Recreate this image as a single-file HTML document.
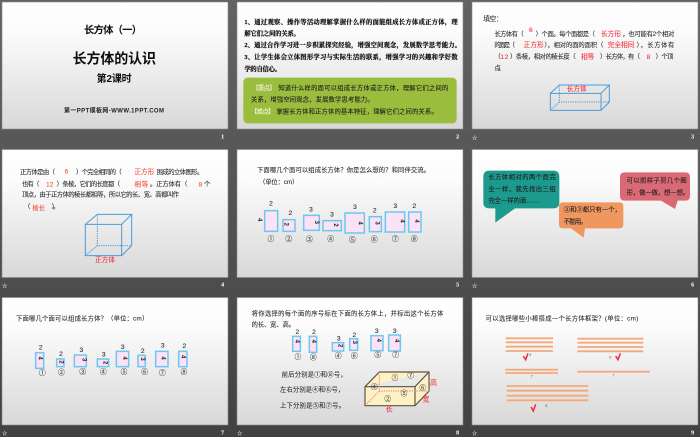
<!DOCTYPE html>
<html><head><meta charset="utf-8">
<style>
html,body{margin:0;padding:0;background:#555;width:700px;height:437px;overflow:hidden}
svg{display:block;position:absolute;left:0;top:0}
text{font-family:"Liberation Sans","Noto Sans CJK SC",sans-serif;dominant-baseline:central;fill:#2a2a2a;stroke:#2a2a2a;stroke-width:.25;font-size:19px}
.r{fill:#f0303c;stroke:#f0303c}
.o{fill:#f2503a;stroke:#f2503a}
.b{font-weight:bold;fill:#111;stroke:none}
.s{font-family:"Liberation Serif","Noto Serif CJK SC",serif;font-weight:bold;fill:#111;stroke:#111;stroke-width:.6;font-size:19px}
.n{font-family:"Liberation Serif",serif;font-weight:bold;fill:#f2f2f2;stroke:#f2f2f2;font-size:18px;text-anchor:middle}
.st{fill:#ddd;stroke:#ddd;font-size:16px;text-anchor:middle}
.m{text-anchor:middle;font-size:20px;fill:#2a2a2a}
.c{text-anchor:middle;font-size:20px;fill:#3a3a3a;stroke:#3a3a3a}
.i{text-anchor:middle;font-size:18px;font-weight:bold;fill:#222;stroke:none}
.w{fill:#fff;stroke:#fff}
.d{fill:#1c1c1c;stroke:#1c1c1c;font-size:19px}
.t{font-size:11px;fill:#555;stroke:none}
rect.f{fill:#fbe2f6;stroke:#6cc8f0;stroke-width:4.5}
.bar{stroke:#f4a97c;stroke-width:5.5}
.ck{fill:none;stroke:#ee2b3c;stroke-width:4.5}
.cb{fill:none;stroke:#4d9bd6;stroke-width:3}
.cd{fill:none;stroke:#4d9bd6;stroke-width:3;stroke-dasharray:4 3}
</style></head>
<body>
<svg width="700" height="437" viewBox="0 0 700 437" xmlns="http://www.w3.org/2000/svg">
<defs>
<linearGradient id="bg" x1="0" y1="0" x2="0" y2="1"><stop offset="0" stop-color="#636363"/><stop offset="1" stop-color="#414141"/></linearGradient>
<linearGradient id="sl" x1="0" y1="0" x2="0" y2="1"><stop offset="0" stop-color="#ffffff"/><stop offset=".25" stop-color="#fbfbfb"/><stop offset="1" stop-color="#d8d8d8"/></linearGradient>
<filter id="sf" x="-5%" y="-5%" width="110%" height="110%"><feGaussianBlur stdDeviation=".35"/></filter>
</defs>
<rect width="700" height="437" fill="url(#bg)"/>
<g fill="url(#sl)" stroke="#8a8a8a" stroke-width=".6">
<rect x="2" y="2" width="226" height="127"/><rect x="237" y="2" width="226" height="127"/><rect x="472" y="2" width="226" height="127"/>
<rect x="2" y="149.5" width="226" height="128"/><rect x="237" y="149.5" width="226" height="128"/><rect x="472" y="149.5" width="226" height="128"/>
<rect x="2" y="297.5" width="226" height="127.5"/><rect x="237" y="297.5" width="226" height="127.5"/><rect x="472" y="297.5" width="226" height="127.5"/>
</g>
<g filter="url(#sf)">

<!-- slide 1 -->
<g transform="translate(0,0) scale(.33333)">
<text class="b" x="252" y="93" style="font-size:31px" textLength="174">长方体（一）</text>
<text class="b" x="218" y="175" style="font-size:42px" textLength="250">长方体的认识</text>
<text class="b" x="290" y="239" style="font-size:30px" textLength="105">第2课时</text>
<text class="b" x="192" y="334" style="font-size:18px;fill:#222" textLength="300">第一PPT模板网-WWW.1PPT.COM</text>
<text class="n" x="668" y="413">1</text>
</g>

<!-- slide 2 -->
<g transform="translate(235,0) scale(.33333)">
<text class="s" x="28" y="67" textLength="640">1、通过观察、操作等活动理解掌握什么样的面能组成长方体或正方体，理</text>
<text class="s" x="28" y="102" textLength="167">解它们之间的关系。</text>
<text class="s" x="28" y="136" textLength="650">2、通过合作学习进一步积累探究经验，增强空间观念，发展数学思考能力。</text>
<text class="s" x="28" y="172" textLength="640">3、让学生体会立体图形学习与实际生活的联系，增强学习的兴趣和学好数</text>
<text class="s" x="28" y="208" textLength="110">学的自信心。</text>
<rect x="25" y="233" width="640" height="137" rx="13" fill="#9bbd3e"/>
<text class="w" x="52" y="265" style="fill:#f4f4e4;stroke:#f4f4e4" textLength="70">【重点】</text>
<text class="d" x="130" y="265" textLength="510">知道什么样的面可以组成长方体或正方体，理解它们之间的</text>
<text class="d" x="48" y="300" textLength="368">关系，增强空间观念，发展数学思考能力。</text>
<text class="w" x="48" y="336" style="fill:#f4f4e4;stroke:#f4f4e4" textLength="70">【难点】</text>
<text class="d" x="124" y="336" textLength="484">掌握长方体和正方体的基本特征，理解它们之间的关系。</text>
<text class="n" x="668" y="413">2</text>
</g>

<!-- slide 3 -->
<g transform="translate(465,0) scale(.33333)">
<text x="55" y="58" style="font-size:20px" textLength="58">填空：</text>
<text x="88" y="103" textLength="88">长方体有（</text>
<text class="r" x="192" y="92" style="font-size:20px">6</text>
<text x="212" y="103" textLength="178">）个面。每个面都是（</text>
<text class="r" x="408" y="103" style="font-size:20px" textLength="60">长方形</text>
<text x="472" y="103" textLength="156">，也可能有2个相对</text>
<text x="88" y="136" textLength="62">的面是（</text>
<text class="r" x="176" y="136" style="font-size:20px" textLength="60">正方形</text>
<text x="238" y="136" textLength="177">），相对的面的面积（</text>
<text class="r" x="428" y="136" style="font-size:20px" textLength="80">完全相同</text>
<text x="515" y="136" textLength="113">），长方体有</text>
<text x="88" y="171">（</text>
<text class="r" x="106" y="173" style="font-size:20px" textLength="24">12</text>
<text x="135" y="171" textLength="197">）条棱，相对的棱长度（</text>
<text class="r" x="348" y="173" style="font-size:20px" textLength="40">相等</text>
<text x="405" y="171" textLength="120">）长方体，有（</text>
<text class="r" x="545" y="172" style="font-size:20px">8</text>
<text x="572" y="171" textLength="53">）个顶</text>
<text x="88" y="205" textLength="30">点。</text>
<path class="cd" d="M283 255V306H433M283 306L256 331"/>
<path class="cb" d="M256 280H408V331H256ZM256 280L283 255H433L408 280M433 255V306L408 331"/>
<text class="r" x="305" y="269" style="font-size:20px" textLength="60">长方体</text>
<text class="n" x="683" y="413">3</text>
<text class="st" x="29" y="415">☆</text>
</g>

<!-- slide 4 -->
<g transform="translate(0,145) scale(.33333)">
<text x="60" y="83" textLength="105">正方体是由（</text>
<text class="o" x="194" y="81" style="font-size:20px">6</text>
<text x="228" y="83" textLength="137">）个完全相同的（</text>
<text class="o" x="403" y="83" style="font-size:20px" textLength="60">正方形</text>
<text x="470" y="83" textLength="140">围成的立体图形。</text>
<text x="66" y="118" textLength="52">也有（</text>
<text class="o" x="138" y="120" style="font-size:20px" textLength="22">12</text>
<text x="170" y="118" textLength="190">）条棱，它们的长度都（</text>
<text class="o" x="403" y="120" style="font-size:20px" textLength="42">相等</text>
<text x="450" y="118" textLength="112">。正方体有（</text>
<text class="o" x="596" y="120" style="font-size:20px">8</text>
<text x="612" y="118" textLength="18">个</text>
<text x="66" y="150" textLength="471">顶点，由于正方体的棱长都相等，所以它的长、宽、高都叫作</text>
<text x="72" y="186">（</text>
<text class="o" x="97" y="190" style="font-size:19px" textLength="38">棱长</text>
<text x="155" y="186" textLength="23">）。</text>
<path class="cd" d="M292 208V302H395M292 302L256 332"/>
<path class="cb" d="M256 238H365V332H256ZM256 238L292 208H395L365 238M395 208V302L365 332"/>
<text class="r" x="285" y="347" style="font-size:20px" textLength="60">正方体</text>
<text class="n" x="668" y="422">4</text>
<text class="st" x="14" y="424">☆</text>
</g>

<!-- slide 5 -->
<g transform="translate(235,145) scale(.33333)">
<text x="66" y="77" textLength="519">下面哪几个面可以组成长方体？你是怎么想的？和同伴交流。</text>
<text x="72" y="112" textLength="118">（单位：cm）</text>
<rect class="f" x="89" y="197" width="39" height="62"/>
<rect class="f" x="144" y="224" width="36" height="35"/>
<rect class="f" x="206" y="211" width="47" height="45"/>
<rect class="f" x="264" y="227" width="55" height="30"/>
<rect class="f" x="330" y="204" width="58" height="60"/>
<rect class="f" x="403" y="215" width="36" height="45"/>
<rect class="f" x="451" y="201" width="58" height="60"/>
<rect class="f" x="521" y="201" width="37" height="60"/>
<text class="m" x="108" y="177">2</text><text class="m" x="166" y="205">2</text><text class="m" x="228" y="195">3</text><text class="m" x="291" y="210">3</text><text class="m" x="360" y="187">3</text><text class="m" x="419" y="198">2</text><text class="m" x="481" y="185">3</text><text class="m" x="538" y="184">2</text>
<text class="i" transform="rotate(90 72 224)" x="72" y="224">4</text>
<text class="i" transform="rotate(90 152 238)" x="152" y="238">2</text>
<text class="i" transform="rotate(90 243 232)" x="243" y="232">3</text>
<text class="i" transform="rotate(90 300 240)" x="300" y="240">2</text>
<text class="i" transform="rotate(90 374 234)" x="374" y="234">4</text>
<text class="i" transform="rotate(90 425 234)" x="425" y="234">3</text>
<text class="i" transform="rotate(90 499 228)" x="499" y="228">4</text>
<text class="i" transform="rotate(90 543 228)" x="543" y="228">4</text>
<text class="c" x="108" y="283">①</text><text class="c" x="161" y="283">②</text><text class="c" x="223" y="285">③</text><text class="c" x="287" y="283">④</text><text class="c" x="352" y="286">⑤</text><text class="c" x="418" y="285">⑥</text><text class="c" x="481" y="284">⑦</text><text class="c" x="538" y="284">⑧</text>
<text class="n" x="668" y="422">5</text>
</g>

<!-- slide 6 -->
<g transform="translate(465,145) scale(.33333)">
<path fill="#1f9a8e" d="M91 190H73Q55 190 55 172V95Q55 77 73 77H265Q283 77 283 95V172Q283 190 265 190H150L91 233Z"/>
<text class="d" x="70" y="98" textLength="202">长方体相对的两个面完</text>
<text class="d" x="70" y="133" textLength="202">全一样，我先找出三组</text>
<text class="d" x="70" y="168" textLength="152">完全一样的面……</text>
<path fill="#f0975f" d="M318 250H294Q282 250 282 238V184Q282 172 294 172H463Q475 172 475 184V238Q475 250 463 250H360L356 278Z"/>
<text class="d" x="296" y="195" textLength="172">②和③都只有一个，</text>
<text class="d" x="296" y="231" textLength="69">不能用。</text>
<path fill="#d96b75" d="M588 167H479Q465 167 465 153V96Q465 82 479 82H661Q675 82 675 96V153Q675 167 661 167H638L630 192Z"/>
<text class="d" x="485" y="108" textLength="180">可以照样子剪几个图</text>
<text class="d" x="485" y="144" textLength="187">形，做一做，想一想。</text>
<text class="n" x="683" y="422">6</text>
<text class="st" x="29" y="424">☆</text>
</g>

<!-- slide 7 -->
<g transform="translate(0,290) scale(.33333)">
<text x="48" y="87" textLength="397">下面哪几个面可以组成长方体？（单位：cm）</text>
<rect class="f" x="107" y="188" width="24" height="47"/>
<rect class="f" x="170" y="207" width="22" height="23"/>
<rect class="f" x="223" y="195" width="36" height="35"/>
<rect class="f" x="292" y="207" width="34" height="23"/>
<rect class="f" x="349" y="184" width="37" height="46"/>
<rect class="f" x="414" y="196" width="22" height="34"/>
<rect class="f" x="467" y="184" width="37" height="46"/>
<rect class="f" x="536" y="184" width="25" height="46"/>
<text class="m" x="122" y="174">2</text><text class="m" x="183" y="194">2</text><text class="m" x="244" y="182">3</text><text class="m" x="311" y="195">3</text><text class="m" x="368" y="172">3</text><text class="m" x="428" y="184">2</text><text class="m" x="488" y="168">3</text><text class="m" x="553" y="170">2</text>
<text class="i" transform="rotate(90 119 204)" x="119" y="204">4</text>
<text class="i" transform="rotate(90 181 216)" x="181" y="216">2</text>
<text class="i" transform="rotate(90 250 209)" x="250" y="209">3</text>
<text class="i" transform="rotate(90 313 218)" x="313" y="218">2</text>
<text class="i" transform="rotate(90 372 204)" x="372" y="204">4</text>
<text class="i" transform="rotate(90 426 207)" x="426" y="207">3</text>
<text class="i" transform="rotate(90 488 204)" x="488" y="204">4</text>
<text class="i" transform="rotate(90 548 200)" x="548" y="200">4</text>
<text class="c" x="127" y="251">①</text><text class="c" x="184" y="249">②</text><text class="c" x="248" y="248">③</text><text class="c" x="310" y="248">④</text><text class="c" x="372" y="248">⑤</text><text class="c" x="434" y="248">⑥</text><text class="c" x="487" y="250">⑦</text><text class="c" x="552" y="247">⑧</text>
<text class="n" x="668" y="430">7</text>
<text class="st" x="14" y="432">☆</text>
</g>

<!-- slide 8 -->
<g transform="translate(235,290) scale(.33333)">
<text x="50" y="72" textLength="575">将你选择的每个面的序号标在下面的长方体上，并标出这个长方体</text>
<text x="50" y="105" textLength="130">的长、宽、高。</text>
<rect class="f" x="173" y="139" width="23" height="45"/>
<rect class="f" x="223" y="139" width="22" height="48"/>
<rect class="f" x="292" y="158" width="34" height="25"/>
<rect class="f" x="344" y="146" width="24" height="35"/>
<rect class="f" x="408" y="137" width="36" height="45"/>
<rect class="f" x="461" y="135" width="35" height="48"/>
<text class="m" x="187" y="127">2</text><text class="m" x="237" y="128">2</text><text class="m" x="311" y="147">3</text><text class="m" x="358" y="136">2</text><text class="m" x="425" y="124">3</text><text class="m" x="479" y="124">3</text>
<text class="i" transform="rotate(90 185 154)" x="185" y="154">4</text>
<text class="i" transform="rotate(90 234 154)" x="234" y="154">4</text>
<text class="i" transform="rotate(90 313 167)" x="313" y="167">2</text>
<text class="i" transform="rotate(90 357 157)" x="357" y="157">3</text>
<text class="i" transform="rotate(90 429 151)" x="429" y="151">4</text>
<text class="i" transform="rotate(90 483 152)" x="483" y="152">4</text>
<text class="c" x="189" y="202">①</text><text class="c" x="235" y="204">⑧</text><text class="c" x="310" y="199">④</text><text class="c" x="358" y="199">⑥</text><text class="c" x="428" y="197">⑤</text><text class="c" x="482" y="197">⑦</text>
<text x="140" y="255" textLength="195">前后分别是①和⑧号，</text>
<text x="135" y="300" textLength="193">左右分别是④和⑥号，</text>
<text x="135" y="348" textLength="195">上下分别是⑤和⑦号。</text>
<path fill="#fcf2c6" stroke="#5c5340" stroke-width="3.5" d="M390 290L433 246H582V303L540 347H390ZM390 290H540L582 246M540 290V347"/>
<path fill="none" stroke="#ee7a80" stroke-width="3" stroke-dasharray="4 3" d="M433 246V303H582M433 303L390 347"/>
<text class="c" x="480" y="265">①</text><text class="c" x="527" y="258">⑦</text><text class="c" x="418" y="293">④</text><text class="c" x="507" y="312">⑤</text><text class="c" x="458" y="329">②</text><text class="c" x="563" y="295">⑥</text>
<text class="r" x="585" y="280" style="font-size:21px">高</text>
<text class="r" x="562" y="330" style="font-size:21px">宽</text>
<text class="r" x="452" y="360" style="font-size:21px">长</text>
<text class="n" x="668" y="430">8</text>
<text class="st" x="14" y="432">☆</text>
</g>

<!-- slide 9 -->
<g transform="translate(465,290) scale(.33333)">
<text x="62" y="87" textLength="458">可以选择哪些小棒搭成一个长方体框架？(单位：cm)</text>
<path class="bar" d="M122 145H264M122 157H264M122 170H264M122 183H264M337 146H535M337 158H535M337 171H535M337 184H535M121 239H279M121 249H279M337 245H555M125 288H370M125 302H370M125 317H370M125 331H370"/>
<path class="ck" d="M175 198L182 209L189 190"/>
<path class="ck" d="M452 198L459 209L466 190"/>
<path class="ck" d="M198 351L205 363L212 343"/>
<text class="t" x="193" y="195">4</text>
<text class="t" x="433" y="202">6</text>
<text class="t" x="197" y="260">7</text>
<text class="t" x="442" y="257">7</text>
<text class="t" x="241" y="348">8</text>
<text class="n" x="683" y="430">9</text>
<text class="st" x="29" y="432">☆</text>
</g>
</g>
</svg>
</body></html>
